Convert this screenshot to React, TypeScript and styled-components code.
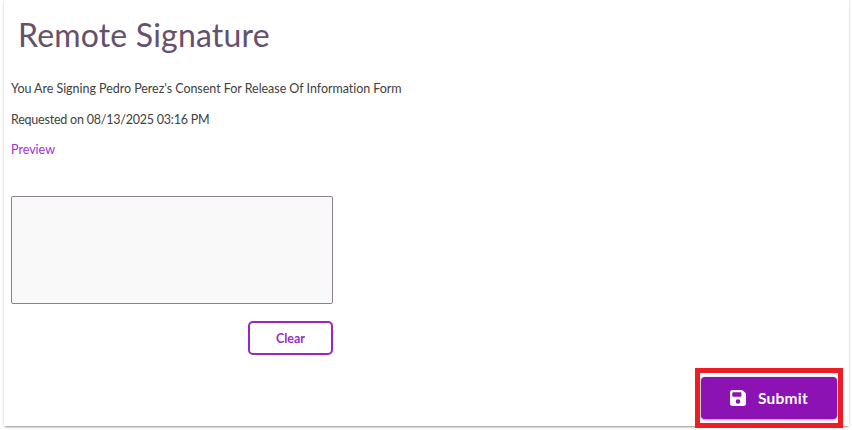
import React from "react";
import styled, { createGlobalStyle } from "styled-components";

const Global = createGlobalStyle`
  html, body { margin: 0; padding: 0; background: #fff; }
  body { font-family: Lato, "Open Sans", sans-serif; }
  #root { width: 852px; height: 430px; overflow: hidden; }
`;
const Card = styled.div`
  position: relative;
  box-sizing: border-box;
  width: 845px;
  height: 426px;
  margin-left: 4px;
  background: #fff;
  box-shadow: 0 2px 2px -1px rgba(0,0,0,0.38), 0 0 3px rgba(0,0,0,0.16);
  padding: 0 7px;
  display: flex;
  flex-direction: column;
`;
const Title = styled.h1`
  margin: 13px 0 0 7px;
  font-size: 32px;
  line-height: 44px;
  font-weight: 400;
  color: #64516d;
  letter-spacing: 0.18px;
`;
const Line = styled.p`
  margin: 23px 0 0;
  font-size: 12.5px;
  line-height: 18px;
  color: #414141;
  letter-spacing: -0.04px;
`;
const DateLine = styled(Line)`
  margin-top: 12.5px;
  letter-spacing: -0.22px;
`;
const Link = styled.a`
  display: block;
  margin-top: 12.5px;
  font-size: 12.5px;
  line-height: 18px;
  color: #a02fd4;
`;
const SignColumn = styled.div`
  width: 322px;
  margin-top: 37px;
  display: flex;
  flex-direction: column;
  align-items: flex-end;
`;
const Pad = styled.div`
  box-sizing: border-box;
  width: 322px;
  height: 108px;
  background: #f9f9f9;
  border: 1px solid #8a8090;
  border-radius: 2px;
`;
const ClearButton = styled.button`
  box-sizing: border-box;
  width: 85px;
  height: 34px;
  margin-top: 17px;
  background: #fff;
  border: 2px solid #9a25c2;
  border-radius: 5px;
  color: #9a2cc8;
  font: 700 12.5px Lato, sans-serif;
  padding: 0;
`;
const Footer = styled.div`
  flex: 1;
  display: flex;
  justify-content: flex-end;
  align-items: flex-end;
  padding: 0 5px 7px 0;
`;
const SubmitFrame = styled.div`
  position: relative;
`;
const SubmitButton = styled.button`
  box-sizing: border-box;
  width: 136px;
  height: 42px;
  display: flex;
  align-items: center;
  justify-content: center;
  gap: 12px;
  padding: 0 0 1px 0;
  background: #8c12b4;
  border: 0;
  border-radius: 4px;
  box-shadow: 0 1px 3px rgba(0,0,0,0.45);
  color: #fff;
  font: 700 15.5px Lato, sans-serif;
  letter-spacing: 0.25px;
`;
const Highlight = styled.div`
  position: absolute;
  left: -6px;
  top: -9px;
  right: -6px;
  bottom: -9px;
  border: 5px solid #ee1c25;
  box-sizing: border-box;
  pointer-events: none;
`;

export default function App() {
  return (
    <>
      <Global />
      <Card>
        <Title>Remote Signature</Title>
        <Line>You Are Signing Pedro Perez's Consent For Release Of Information Form</Line>
        <DateLine>Requested on 08/13/2025 03:16 PM</DateLine>
        <Link>Preview</Link>
        <SignColumn>
          <Pad />
          <ClearButton>Clear</ClearButton>
        </SignColumn>
        <Footer>
          <SubmitFrame>
            <SubmitButton>
              <svg width="16" height="16" viewBox="0 0 448 448" fill="#fff" aria-hidden="true">
                <path d="M64 0C29 0 0 29 0 64v320c0 35 29 64 64 64h320c35 0 64-29 64-64V125c0-17-7-33-19-45L368 19C356 7 340 0 323 0H64zm0 96c0-18 14-32 32-32h192c18 0 32 14 32 32v64c0 18-14 32-32 32H96c-18 0-32-14-32-32V96zm160 160a64 64 0 1 1 0 128 64 64 0 1 1 0-128z" />
              </svg>
              Submit
            </SubmitButton>
            <Highlight />
          </SubmitFrame>
        </Footer>
      </Card>
    </>
  );
}
